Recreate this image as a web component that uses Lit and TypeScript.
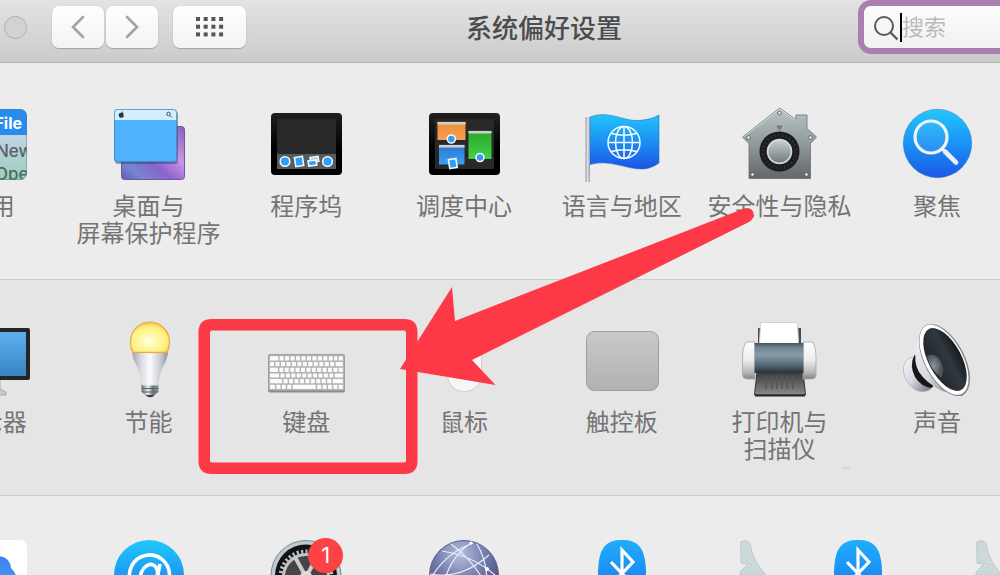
import { LitElement, html, svg, css, nothing } from "lit";
import { customElement, property } from "lit/decorators.js";

const general = svg`
  <defs>
    <linearGradient id="g" x2="0" y2="1"><stop offset="0.35" stop-color="#c3d3e2"/><stop offset="1" stop-color="#9cd0bd"/></linearGradient>
    <clipPath id="c"><rect x="2" y="3" width="72" height="71" rx="7"/></clipPath>
  </defs>
  <g clip-path="url(#c)" font-family="Inter, sans-serif" font-size="17">
    <rect x="2" y="3" width="72" height="71" fill="url(#g)"/>
    <rect x="2" y="3" width="72" height="26" fill="#258df0"/>
    <text x="69" y="23" text-anchor="end" font-size="16" font-weight="700" fill="#fff">File</text>
    <text x="43" y="51" font-weight="500" fill="#56626b">New</text>
    <text x="42" y="74" font-weight="500" fill="#4e6b66">Open</text>
  </g>
  <rect x="2.5" y="3.5" width="71" height="70" rx="7" fill="none" stroke="#5a7d96" stroke-opacity=".5"/>`;

const desktop = svg`
  <defs>
    <linearGradient id="p" x1="0" y1="1" x2="1" y2="0"><stop offset="0" stop-color="#6a55b8"/><stop offset=".18" stop-color="#7587cc"/><stop offset=".4" stop-color="#8a63cc"/><stop offset=".65" stop-color="#cf94e4"/><stop offset="1" stop-color="#8260b4"/></linearGradient>
  </defs>
  <rect x="10.5" y="20.5" width="63" height="53" rx="3" fill="url(#p)" stroke="#6d5a9a"/>
  <rect x="4" y="5" width="63" height="53" rx="3" fill="#1d3768" opacity=".45"/>
  <rect x="3" y="3" width="63" height="53" rx="3" fill="#4fb2fd"/>
  <path d="M3 14V6q0-3 3-3h57q3 0 3 3v8z" fill="#d2effd"/>
  <rect x="3.500" y="3.500" width="62" height="52" rx="3" fill="none" stroke="#3c84b8" stroke-opacity=".75"/>
  <path d="M10.500 6.500q1-.8 1.500-1.500q.3 1-.7 1.900q1.200 0 1.600.6q-1.400 1.300 0 2.600q-.8 1.900-1.700 1.700q-.8-.4-1.500 0q-1 .2-1.700-1.400q-.9-3 1.300-3.300z" fill="#263848"/>
  <circle cx="57.500" cy="8" r="1.800" fill="none" stroke="#34566c"/><path d="M59 9.500l2 2" stroke="#34566c"/>`;

const screen = svg`
  <defs><linearGradient id="b" x2="0" y2="1"><stop offset="0" stop-color="#202020"/><stop offset=".6" stop-color="#000"/></linearGradient></defs>
  <rect x="3" y="7" width="71" height="62" rx="4" fill="url(#b)"/>
  <rect x="9" y="13" width="59" height="50" fill="#282828"/>`;

const dock = svg`${screen}
  <rect x="9" y="48" width="59" height="15" fill="#565b5e"/>
  <g fill="#2e9df8" stroke="#f4f7fa" stroke-width="1.600">
    <circle cx="17" cy="55.500" r="4.800"/><circle cx="59.500" cy="55.500" r="4.800"/>
    <rect x="27" y="51" width="8" height="9" transform="rotate(-9 31 55)"/>
    <path d="M42 51.500l8-1.200.8 5-8 1z" fill="#b3c4cf"/>
    <path d="M40 55l8-1 .8 5-8 1z"/>
  </g>`;

const mission = svg`
  <defs>
    <linearGradient id="o" x2="0" y2="1"><stop offset="0" stop-color="#ea8d36"/><stop offset="1" stop-color="#f5a055"/></linearGradient>
    <linearGradient id="n" x2="0" y2="1"><stop offset="0" stop-color="#2ba72a"/><stop offset="1" stop-color="#42d048"/></linearGradient>
    <linearGradient id="u" x2="0" y2="1"><stop offset="0" stop-color="#2e74cc"/><stop offset="1" stop-color="#39a0f5"/></linearGradient>
  </defs>
  ${screen}
  <rect x="11.500" y="16" width="28" height="18" fill="url(#o)"/><path d="M11.500 17.200h28" stroke="#d6cfc8" stroke-width="2.600"/>
  <rect x="42.500" y="25" width="23" height="28" fill="url(#n)"/><path d="M42.500 26.200h23" stroke="#c9d4c8" stroke-width="2.600"/>
  <rect x="13" y="39" width="25.500" height="19.500" fill="url(#u)"/><path d="M13 40.200h25.500" stroke="#c9d0d8" stroke-width="2.600"/>
  <g fill="#2f9df8" stroke="#f4f7fa" stroke-width="1.600">
    <circle cx="25.300" cy="33" r="4"/><circle cx="54" cy="51.500" r="4"/>
    <rect x="23" y="53" width="7.500" height="9" transform="rotate(-9 27 57)"/>
  </g>`;

const language = svg`
  <defs>
    <linearGradient id="f" x2="0" y2="1"><stop offset="0" stop-color="#23c3fb"/><stop offset=".5" stop-color="#1a90f5"/><stop offset="1" stop-color="#1c53e4"/></linearGradient>
    <linearGradient id="m"><stop offset="0" stop-color="#8f98a8"/><stop offset=".5" stop-color="#e3e6ee"/><stop offset="1" stop-color="#8a93a8"/></linearGradient>
  </defs>
  <path d="M6 11C24 4 39 15 54 14.500C63 14 70 12 75 9V57C69 61 64 63 57 63C42 63 25 53 6 58.500z" fill="url(#f)" stroke="#2174bd" stroke-opacity=".6"/>
  <rect x="1.500" y="11" width="4.500" height="65" fill="url(#m)"/>
  <g fill="none" stroke="#fff" stroke-width="1.500">
    <circle cx="40" cy="36.500" r="16"/><ellipse cx="40" cy="36.500" rx="8.500" ry="16"/>
    <path d="M40 20.500v32M24 36.500h32M27.500 27.500q12.500 3.500 25 0M27.500 45.500q12.500-3.500 25 0"/>
  </g>`;

const security = svg`
  <defs>
    <linearGradient id="h" x2="0" y2="1"><stop offset="0" stop-color="#b9c5c8"/><stop offset=".5" stop-color="#929b9e"/><stop offset="1" stop-color="#626667"/></linearGradient>
    <linearGradient id="k" x2="0" y2="1"><stop offset="0" stop-color="#c4cdd0"/><stop offset="1" stop-color="#727c80"/></linearGradient>
  </defs>
  <path d="M38.500 2L55 13.500V9h11v13.500L75.500 31L69.500 37.500V72.500H8V37.500L1.500 31z" fill="url(#h)" stroke="#697174" stroke-width=".8"/>
  <path d="M38.500 3L2.500 31M38.500 3L55 14.500" stroke="#dce4e6" stroke-width=".8" fill="none"/>
  <circle cx="38.500" cy="45.500" r="20" fill="#1b1d1e"/>
  <circle cx="38.500" cy="45.500" r="16.500" fill="none" stroke="#34383a" stroke-width="3" stroke-dasharray="1 3"/>
  <circle cx="38.500" cy="45.500" r="12.800" fill="#d4dadc"/><circle cx="38.500" cy="45.500" r="11" fill="url(#k)"/>
  <path d="M36 20h5L38.500 24z" fill="#7d878a" stroke="#566063" stroke-width=".6"/>
  <g fill="#e5ebed" stroke="#535c5f" stroke-width=".8"><circle cx="38.500" cy="7" r="1.800"/><circle cx="7.500" cy="31.500" r="1.800"/><circle cx="69.500" cy="31.500" r="1.800"/><circle cx="11.500" cy="68.500" r="1.800"/><circle cx="65.500" cy="68.500" r="1.800"/></g>`;

const spotlight = svg`
  <defs><linearGradient id="s" x2="0" y2="1"><stop offset="0" stop-color="#24c7fb"/><stop offset=".5" stop-color="#1993f6"/><stop offset="1" stop-color="#1c58e5"/></linearGradient></defs>
  <circle cx="38.500" cy="37.500" r="34.200" fill="url(#s)" stroke="#2774c5" stroke-opacity=".5"/>
  <circle cx="32" cy="31" r="16" fill="#fff" fill-opacity=".08" stroke="#f1f5f9" stroke-width="3.200"/>
  <path d="M43.500 43l3 3" stroke="#f1f5f9" stroke-width="3"/><path d="M46 45.500L57 56.500" stroke="#ebeef2" stroke-width="4.600" stroke-linecap="round"/>`;

const display = svg`
  <defs><linearGradient id="d" x2="0" y2="1"><stop offset="0" stop-color="#5db0ee"/><stop offset="1" stop-color="#3983c3"/></linearGradient></defs>
  <path d="M28 58H47V67L53 70V73H22V70L28 67z" fill="#c6c9cc" stroke="#9da0a3" stroke-width=".8"/>
  <rect x="-1" y="6" width="78" height="52" rx="2" fill="#252525"/><rect x="3" y="10" width="70" height="44" fill="url(#d)"/>`;

const bulb = svg`
  <defs>
    <radialGradient id="y" cx=".47" cy=".62" r=".62"><stop offset="0" stop-color="#fffff0"/><stop offset=".3" stop-color="#fffab0"/><stop offset=".75" stop-color="#fff080"/><stop offset="1" stop-color="#f5bd3e"/></radialGradient>
    <linearGradient id="w"><stop offset="0" stop-color="#a1a1a9"/><stop offset=".25" stop-color="#dadae2"/><stop offset=".5" stop-color="#fafaff"/><stop offset=".8" stop-color="#c8c8d1"/><stop offset="1" stop-color="#8e8e97"/></linearGradient>
    <linearGradient id="x"><stop offset="0" stop-color="#5c7078"/><stop offset=".4" stop-color="#eaf0f2"/><stop offset=".65" stop-color="#6f7678"/><stop offset="1" stop-color="#8c9aa0"/></linearGradient>
  </defs>
  <g transform="translate(-.5 -.5)">
    <path d="M31 63H48V70L44 74Q39.500 78 35 74L31 70z" fill="url(#x)"/><path d="M31 67H48M31.500 70.500H47.500" stroke="#5e676a"/><path d="M35 73.500H44Q39.500 78 35 73.500" fill="#3d3a38"/>
    <path d="M21.500 30.500H57.500Q57 37 53 44Q49 52 48.500 60Q48.500 64 45 64H34Q30.500 64 30.500 60Q30 52 26 44Q22 37 21.500 30.500z" fill="url(#w)"/>
    <path d="M22.500 30.800Q20 26.500 20 20.500A19.500 20 0 0 1 59 20.500Q59 26.500 56.500 30.800z" fill="url(#y)" stroke="#eda93c" stroke-width="1.200"/>
  </g>`;

const keyRows = [
  [8, 4, 4, 4, 4, 4, 4, 4, 4, 4, 4, 3, 4],
  [4, 4, 4, 4, 4, 4, 4, 4, 4, 4, 4, 4, 7],
  [8, 4, 4, 4, 4, 4, 4, 4, 4, 4, 4, 4, 4],
  [9, 4, 4, 4, 4, 4, 4, 4, 4, 4, 4, 8],
  [12, 4, 4, 4, 4, 4, 4, 4, 4, 4, 10],
  [5, 4, 4, 4, 23, 4, 4, 4, 4, 4],
];
const keyboard = svg`
  <rect x="0" y="33.500" width="77" height="37" rx="2" fill="#8a8a8a"/>
  <rect x="0.500" y="32.500" width="76" height="36" rx="1.500" fill="#b4b4b4" stroke="#a0a0a0"/>
  ${keyRows.map((row, r) => {
    const scale = (74.2 - row.length * 1.4) / row.reduce((a, b) => a + b, 0);
    let x = 2;
    return row.map((k) => {
      const w = k * scale;
      const at = x;
      x += w + 1.4;
      return svg`<rect x=${at} y=${34.3 + r * 5.7} width=${w} height="4.200" rx=".6" fill="#fbfbfb"/>`;
    });
  })}`;

const mouse = svg`<rect x="21.500" y="8.500" width="34" height="61" rx="16" fill="#f6f6f6" stroke="#cfcfcf"/>`;

const trackpad = svg`
  <defs><linearGradient id="t" x2="0" y2="1"><stop offset="0" stop-color="#c9c9c9"/><stop offset="1" stop-color="#b1b1b1"/></linearGradient></defs>
  <rect x="2.500" y="9.500" width="72" height="59" rx="8" fill="url(#t)" stroke="#9f9f9f"/>`;

const printer = svg`
  <defs>
    <linearGradient id="e" x2="0" y2="1"><stop offset="0" stop-color="#46535c"/><stop offset=".15" stop-color="#6f8390"/><stop offset=".4" stop-color="#879ba8"/><stop offset=".75" stop-color="#536572"/><stop offset="1" stop-color="#27313a"/></linearGradient>
    <linearGradient id="q" x2="0" y2="1"><stop offset="0" stop-color="#fff"/><stop offset=".5" stop-color="#ececec"/><stop offset=".8" stop-color="#bababa"/><stop offset="1" stop-color="#858585"/></linearGradient>
    <linearGradient id="r" x2="0" y2="1"><stop offset="0" stop-color="#3a3a3a"/><stop offset="1" stop-color="#8a8a8a"/></linearGradient>
  </defs>
  <path d="M17 6h3v16h-3zM57 6h3v16h-3z" fill="#4a4a4a"/>
  <path d="M19.500.500h37l1 21h-39z" fill="#fff" stroke="#d2d2d2"/>
  <path d="M16 50H62L64.500 73H13.500z" fill="url(#r)" stroke="#303030"/>
  <path d="M14 73.500H64" stroke="#262626" stroke-width="1.800"/>
  <path d="M26 53l-1 14M31 53v14M36 53v14M41 53v14M46 53v14M51 53l1 14" stroke="#555" stroke-width="1.500"/>
  <path d="M5 20H14V57H6Q2 57 1.500 53V34Q1.500 26 5 20zM72 20H62V57H71Q75 57 75 53V34Q75 26 72 20z" fill="url(#q)" stroke="#a6a6a6" stroke-width=".8"/>
  <rect x="13.500" y="21" width="49" height="30" fill="url(#e)"/>`;

const sound = svg`
  <defs>
    <linearGradient id="i" x2="1" y2="1"><stop offset="0" stop-color="#f5f5fa"/><stop offset=".5" stop-color="#d8d8e3"/><stop offset="1" stop-color="#6e6e7a"/></linearGradient>
    <radialGradient id="j" cx=".4" cy=".5"><stop offset="0" stop-color="#8c989d"/><stop offset="1" stop-color="#4a5358"/></radialGradient>
    <linearGradient id="z"><stop offset="0" stop-color="#202529"/><stop offset=".6" stop-color="#31383d"/><stop offset="1" stop-color="#171b1f"/></linearGradient>
  </defs>
  <path d="M13 35Q3 39 4.500 50Q6 60 15 67Q23 72 32 67L20 42z" fill="url(#i)" stroke="#a2a2ad" stroke-width=".6"/>
  <path d="M15.500 33Q10 43 16 55Q22 65 33 66L36 60L20 34z" fill="#161719"/>
  <path d="M29 3Q20 9 17.500 24Q14 40 20 50Q27 61 43 69L64 74L48 30z" fill="url(#i)"/>
  <ellipse cx="45.500" cy="38" rx="20" ry="39.500" transform="rotate(-28 45.500 38)" fill="#888791"/>
  <ellipse cx="45.200" cy="37.500" rx="18.800" ry="38.500" transform="rotate(-28 45.500 38)" fill="#fff"/>
  <ellipse cx="46" cy="37.500" rx="16.500" ry="34.500" transform="rotate(-28 46 37.500)" fill="url(#z)"/>
  <path d="M27.500 34Q35 30 41 38Q47 48 42 56Q32 48 27.500 34z" fill="url(#j)"/>`;

const icloud = svg`
  <defs><linearGradient id="l" x2="0" y2="1"><stop offset="0" stop-color="#3b82ec"/><stop offset="1" stop-color="#4fa5fb"/></linearGradient></defs>
  <rect x="3" y="2" width="71" height="71" rx="7" fill="#fff"/>
  <path d="M12 60Q10 45 24 42Q28 18 45 18Q57 19 58 30Q65 36 64 48Q62 61 52 61H23z" fill="url(#l)"/>`;

const accounts = svg`
  <defs><linearGradient id="a" x2="0" y2="1"><stop offset="0" stop-color="#20c8fb"/><stop offset="1" stop-color="#1a6aed"/></linearGradient></defs>
  <circle cx="38" cy="37" r="35" fill="url(#a)"/>
  <g fill="none" stroke="#fff" stroke-width="3.600"><ellipse cx="38" cy="37" rx="8" ry="11" transform="rotate(22 38 37)"/><path d="M49 26L46 41Q45.500 48 50 47.500Q58 46 58.500 36A20 20 0 1 0 49 54"/></g>`;

const update = svg`
  <circle cx="38" cy="37.500" r="35" fill="#bccbd1" stroke="#7b878c"/>
  <circle cx="38" cy="37.500" r="31" fill="#121212"/>
  <circle cx="38" cy="39" r="25.500" fill="none" stroke="#b9c0c2" stroke-width="4" stroke-dasharray="2.200 2.200"/>
  <circle cx="38" cy="39" r="22.500" fill="#454545" stroke="#bfc4c5" stroke-width="3"/>
  <path d="M38 39L27 19M38 39L49 19M38 39H61M38 39H15" stroke="#c9cdce" stroke-width="4"/>
  <circle cx="38" cy="39" r="6" fill="#ddd"/>`;

const network = svg`
  <defs><radialGradient id="v" cx=".45" cy=".2" r=".8"><stop offset="0" stop-color="#b6bddb"/><stop offset=".45" stop-color="#737eac"/><stop offset="1" stop-color="#363d6c"/></radialGradient></defs>
  <circle cx="38" cy="37" r="34.500" fill="url(#v)" stroke="#5b628a"/>
  <g fill="none" stroke="#e9eeff" stroke-width="1.200"><path d="M46 4Q22 20 16 52M16 13Q48 18 70 38M4 36Q35 42 63 17M51 6Q64 28 60 58M25 6Q52 26 64 56M4 42Q18 16 47 5"/></g>
  <g fill="#fff"><circle cx="61" cy="31" r="2"/><circle cx="21" cy="38" r="2"/><circle cx="45" cy="5" r="1.500"/></g>`;

const bluetooth = svg`
  <defs><linearGradient id="bt" x2="0" y2="1"><stop offset="0" stop-color="#20aefa"/><stop offset="1" stop-color="#166cf0"/></linearGradient></defs>
  <path d="M38 2C54 2 62 9 62 37S54 72 38 72S14 65 14 37S22 2 38 2z" fill="url(#bt)"/>
  <path d="M27 24L49 47L38 58V12L49 24L27 47" fill="none" stroke="#fff" stroke-width="3.200"/>`;

const extension = svg`
  <path d="M.800 4Q6 1 10 5Q12 22 26 37H0V34L7 27Q9 31 12 27L1 25z" fill="#ccd9da" stroke="#b4c2c3" stroke-width=".8"/>`;

@customElement("pref-item")
export class PrefItem extends LitElement {
  @property() name = "";
  @property({ attribute: false }) lines: string[] = [];
  @property({ attribute: false }) icon: unknown = nothing;
  @property() badge = "";
  @property({ type: Boolean }) narrow = false;

  static styles = css`
    :host { display: flex; justify-content: center; min-width: 0; }
    button {
      position: relative;
      display: flex;
      flex-direction: column;
      align-items: center;
      gap: 9px;
      padding: 0;
      border: 0;
      background: none;
      color: #747474;
      font: 24px/27px "Noto Sans CJK SC", sans-serif;
      white-space: nowrap;
    }
    svg { display: block; width: 76px; height: 76px; overflow: visible; }
    svg.narrow { width: 40px; }
    .line { display: block; }
    .badge {
      position: absolute;
      top: 0;
      right: 1px;
      width: 35px;
      height: 35px;
      border-radius: 50%;
      background: #fc4245;
      color: #fff;
      font: 22px/35px Inter, sans-serif;
      text-align: center;
    }
  `;

  render() {
    return html`<button type="button" aria-label=${this.name || this.lines.join("")}>
      <svg class=${this.narrow ? "narrow" : ""} viewBox=${this.narrow ? "0 0 40 76" : "0 0 76 76"} aria-hidden="true">${this.icon}</svg>
      ${this.lines.length ? html`<span>${this.lines.map((l) => html`<span class="line">${l}</span>`)}</span>` : nothing}
      ${this.badge ? html`<span class="badge">${this.badge}</span>` : nothing}
    </button>`;
  }
}

interface Pref {
  name?: string;
  lines?: string[];
  icon: unknown;
  badge?: string;
  narrow?: boolean;
}

const personal: Pref[] = [
  { lines: ["通用"], icon: general },
  { lines: ["桌面与", "屏幕保护程序"], icon: desktop },
  { lines: ["程序坞"], icon: dock },
  { lines: ["调度中心"], icon: mission },
  { lines: ["语言与地区"], icon: language },
  { lines: ["安全性与隐私"], icon: security },
  { lines: ["聚焦"], icon: spotlight },
];
const hardware: Pref[] = [
  { lines: ["显示器"], icon: display },
  { lines: ["节能"], icon: bulb },
  { lines: ["键盘"], icon: keyboard },
  { lines: ["鼠标"], icon: mouse },
  { lines: ["触控板"], icon: trackpad },
  { lines: ["打印机与", "扫描仪"], icon: printer },
  { lines: ["声音"], icon: sound },
];
const internet: Pref[] = [
  { name: "iCloud", icon: icloud },
  { name: "互联网帐户", icon: accounts },
  { name: "软件更新", icon: update, badge: "1" },
  { name: "网络", icon: network },
  { name: "蓝牙", icon: bluetooth },
  { name: "扩展", icon: extension, narrow: true },
  { name: "蓝牙", icon: bluetooth },
  { name: "扩展", icon: extension, narrow: true },
];

@customElement("app-root")
export class AppRoot extends LitElement {
  static styles = css`
    * { box-sizing: border-box; }
    :host {
      display: flex;
      flex-direction: column;
      position: relative;
      height: 100vh;
      overflow: hidden;
      background: #ececec;
      font-family: "Noto Sans CJK SC", sans-serif;
    }
    header {
      flex: none;
      display: flex;
      align-items: center;
      padding: 6px 0 14px 4px;
      border-bottom: 1px solid #b0b0b0;
      background: linear-gradient(#e3e3e3, #cbcbcb);
    }
    header button {
      display: grid;
      place-items: center;
      height: 42px;
      padding: 0;
      border: 0;
      border-radius: 7px;
      background: linear-gradient(#fefefe, #f3f3f3);
      box-shadow: 0 1px 1px #a5a5a5, 0 0 1px #b5b5b5;
    }
    header .light {
      width: 23px;
      height: 23px;
      border: 1px solid #b0b0b0;
      border-radius: 50%;
      background: #d2d2d2;
      box-shadow: none;
    }
    .nav { display: flex; gap: 2px; margin: 0 15px 0 25px; }
    .nav button { width: 52px; }
    header .all { width: 73px; }
    h1 {
      flex: 1;
      margin: 0;
      padding-right: 22px;
      color: #4c4c4c;
      font-size: 26px;
      line-height: 40px;
      font-weight: 500;
      text-align: center;
    }
    .search {
      flex: none;
      display: flex;
      align-items: center;
      width: 136px;
      height: 42px;
      padding-left: 9px;
      border-radius: 7px 0 0 7px;
      background: linear-gradient(#fcfcfc, #f1f1f1);
      box-shadow: 0 0 0 6px #ad7fb0;
    }
    .caret { width: 2px; height: 29px; background: #000; }
    input {
      flex: 1;
      min-width: 0;
      height: 42px;
      padding: 0 0 4px;
      border: 0;
      outline: 0;
      background: none;
      font: 22px/36px "Noto Sans CJK SC", sans-serif;
    }
    input::placeholder { color: #bababa; opacity: 1; }
    main { flex: none; padding-top: 1px; }
    section { padding: 42px 0 32px; border-bottom: 1px solid #cccccc; overflow: hidden; }
    section.alt { background: #e5e5e5; }
    section.last { border: 0; }
    .row {
      display: grid;
      grid-template-columns: repeat(7, 1fr);
      margin: 0 -16px 0 -88px;
      min-height: 141px;
    }
    .last .row { grid-template-columns: repeat(5, 4fr) 3fr 2fr 3fr; }
    .last pref-item:last-child { justify-content: flex-end; }
    .marks {
      position: absolute;
      top: 0;
      left: 0;
      width: 1000px;
      height: 575px;
      pointer-events: none;
    }
  `;

  private row(items: Pref[]) {
    return html`<div class="row">
      ${items.map(
        (p) => html`<pref-item .name=${p.name ?? ""} .lines=${p.lines ?? []} .icon=${p.icon} .badge=${p.badge ?? ""} .narrow=${!!p.narrow}></pref-item>`
      )}
    </div>`;
  }

  render() {
    const dots = [0, 1, 2].flatMap((r) => [0, 1, 2, 3].map((c) => svg`<rect x=${c * 7.7} y=${r * 7.7} width="4" height="4" fill="#555"/>`));
    return html`
      <header>
        <button class="light" type="button" aria-label="缩放"></button>
        <div class="nav">
          <button type="button" aria-label="后退"><svg width="14" height="24" viewBox="0 0 14 24"><path d="M12 2L2 12L12 22" fill="none" stroke="#a2a2a2" stroke-width="2.600" stroke-linecap="round"/></svg></button>
          <button type="button" aria-label="前进"><svg width="14" height="24" viewBox="0 0 14 24"><path d="M2 2L12 12L2 22" fill="none" stroke="#a2a2a2" stroke-width="2.600" stroke-linecap="round"/></svg></button>
        </div>
        <button class="all" type="button" aria-label="全部显示"><svg width="28" height="20" viewBox="0 0 28 20">${dots}</svg></button>
        <h1>系统偏好设置</h1>
        <label class="search">
          <svg width="27" height="28" viewBox="0 0 27 28" aria-hidden="true"><circle cx="11" cy="13" r="9" fill="none" stroke="#5a5a5a" stroke-width="2"/><path d="M17.500 19.500L24.500 26.500" stroke="#5a5a5a" stroke-width="2.400"/></svg>
          <span class="caret"></span>
          <input type="text" placeholder="搜索" aria-label="搜索" />
        </label>
      </header>
      <main>
        <section>${this.row(personal)}</section>
        <section class="alt">${this.row(hardware)}</section>
        <section class="last">${this.row(internet)}</section>
      </main>
      <svg class="marks" viewBox="0 0 1000 575" aria-hidden="true">
        <path d="M843 469q4-2 7-1" fill="none" stroke="#d3d3d3" stroke-width="1.500"/>
        <path fill="#fd3947" fill-rule="evenodd" d="M212 319H404Q417.500 319 417.500 332V461Q417.500 474 404 474H212Q198.500 474 198.500 461V332Q198.500 319 212 319zM212 330.500Q210 330.500 210 332.500V460.500Q210 462.500 212 462.500H404Q406 462.500 406 460.500V332.500Q406 330.500 404 330.500z"/>
        <path fill="#fd3947" d="M400 369L452 287L455 321L744 208.500Q750 206.500 753 211.500Q755.500 218 749 222L472 360L495.500 385z"/>
      </svg>
    `;
  }
}
